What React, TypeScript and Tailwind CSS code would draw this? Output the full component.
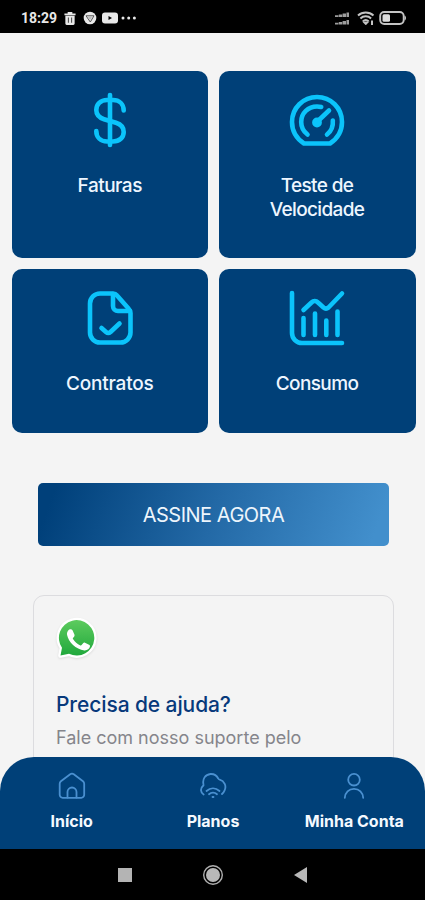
import type { ReactNode } from 'react';

const tiles = [
  { label: 'Faturas', icon: <DollarIcon />, tracking: 'tracking-[-0.5px]' },
  { label: 'Teste de Velocidade', icon: <GaugeIcon />, tracking: 'tracking-[-0.65px]' },
  { label: 'Contratos', icon: <ContractIcon />, tracking: 'tracking-[-0.2px]' },
  { label: 'Consumo', icon: <UsageIcon />, tracking: 'tracking-[-0.6px]' },
];

const navItems = [
  { label: 'Início', icon: <HomeIcon /> },
  { label: 'Planos', icon: <CloudWifiIcon /> },
  { label: 'Minha Conta', icon: <UserIcon /> },
];

function TileIcon({ children }: { children: ReactNode }) {
  return (
    <svg
      viewBox="0 0 60 60"
      className="h-[60px] w-[60px]"
      fill="none"
      stroke="#0bc4fb"
      strokeWidth="4.6"
      strokeLinecap="round"
      strokeLinejoin="round"
    >
      {children}
    </svg>
  );
}

function DollarIcon() {
  return (
    <TileIcon>
      <path d="M30 5v50" />
      <path d="M43.700 20.500c0-6.500-4.500-10.500-10.700-10.500h-6c-6.500 0-10.700 4.500-10.700 10 0 4.500 3 7.700 7.700 9.200l12 3.600c4.700 1.500 7.700 4.700 7.700 9.200 0 5.500-4.200 9.500-10.700 9.500h-6c-6.200 0-10.700-4-10.700-10.500" />
    </TileIcon>
  );
}

function GaugeIcon() {
  return (
    <TileIcon>
      <path d="M17 53.500C9.500 48.500 5 40.500 5 32 5 18 16.200 7 30 7s25 11 25 25c0 8.500-4.500 16.500-12 21.500H17z" />
      <path d="M20.500 44.500C16.500 41.500 14.200 37 14.200 32c0-8.800 7-15.500 15.800-15.500 1.500 0 3 .2 4.200.500" />
      <path d="M45.800 30.500c.5 5.500-1.300 10.500-5.800 14" />
      <path d="M31 31l11-10.500" />
      <circle cx="30" cy="32.500" r="2.600" fill="#0bc4fb" />
    </TileIcon>
  );
}

function ContractIcon() {
  return (
    <TileIcon>
      <path d="M33 5.500H20a10 10 0 0 0-10 10v29a10 10 0 0 0 10 10h20.500a10 10 0 0 0 10-10V25c0-1.800-.6-3-1.800-4.200L37 7.500C36 6.200 34.800 5.500 33 5.500z" />
      <path d="M33 6v12a5 5 0 0 0 5 5h12" />
      <path d="M21.500 40l4.500 4c1.500 1.300 3 1.300 4.500 0l9-8.500" />
    </TileIcon>
  );
}

function UsageIcon() {
  return (
    <TileIcon>
      <path d="M5 5v40a10 10 0 0 0 10 10h40" />
      <path d="M16.500 47V30M28 47V25.500M39.300 47V32.500M50.500 47V23.500" />
      <path d="M16.500 22l8-7.500c2-2 4.500-2 6.500 0l5.500 5c1.500 1.300 3.500 1.300 5 0L55 5.500" />
    </TileIcon>
  );
}

function NavIcon({ children }: { children: ReactNode }) {
  return (
    <svg
      viewBox="0 0 28 28"
      className="h-7 w-7"
      fill="none"
      stroke="#4a90d0"
      strokeWidth="1.8"
      strokeLinecap="round"
      strokeLinejoin="round"
    >
      {children}
    </svg>
  );
}

function HomeIcon() {
  return (
    <NavIcon>
      <path d="M1.700 11.800c0-1 .4-1.800 1.200-2.500l9.300-7c1.100-.8 2.500-.8 3.600 0l9.200 7c.8.700 1.200 1.500 1.200 2.500v11a3 3 0 0 1-3 3H4.700a3 3 0 0 1-3-3z" />
      <path d="M9.500 25.500V20a4.500 4.500 0 0 1 9 0v5.500" />
    </NavIcon>
  );
}

function CloudWifiIcon() {
  return (
    <NavIcon>
      <path d="M4.600 22.500a5.200 5.200 0 0 1-.7-8.500c.5-.4.800-.8.600-1.500C3.200 7 6.200 2.500 11.500 2c3.500-.2 6.200 1.500 7.700 4.500.3.700.7 1 1.500 1.200 4.700 1.300 7 6.300 4.900 10.600-.6 1.500-1.500 2.600-2.600 3.700" />
      <path d="M7.500 19c3.900-3.400 9.100-3.400 13 0M10 22.200c2.300-2 5.700-2 8 0" />
      <path d="M13.500 25h1" />
    </NavIcon>
  );
}

function UserIcon() {
  return (
    <NavIcon>
      <circle cx="14" cy="7.700" r="5.800" />
      <path d="M4.800 25.800c.3-5.400 4-9 9.200-9s8.900 3.600 9.200 9" />
    </NavIcon>
  );
}

function WhatsAppIcon() {
  return (
    <svg viewBox="0 0 44 44" className="h-11 w-11 drop-shadow-[0_1px_1px_rgba(0,0,0,0.1)]">
      <defs>
        <linearGradient id="wa" x1="0" y1="0" x2="0" y2="1">
          <stop offset="0" stopColor="#5dcb5e" />
          <stop offset="1" stopColor="#20a83c" />
        </linearGradient>
      </defs>
      <path
        d="M4.500 38.500L6 30.800A17.700 17.700 0 1 1 13 36.800z"
        fill="url(#wa)"
        stroke="#fff"
        strokeWidth="4.500"
        strokeLinejoin="round"
        paintOrder="stroke"
      />
      <path
        d="M12.200 13.600c1-1.700 3.500-2 4.300-.4l1.900 4.200c.5 1.200-.1 2-1.400 3.500-.3.400-.3.800 0 1.200 1.800 3 4.200 5 7.400 6.300.5.200.9.100 1.200-.3l1.700-2.100c.5-.6 1-.7 1.700-.3l4 2c.8.400 1.100.8 1 1.600-.3 2.700-3 4.300-5.600 4.100-8.500-.6-16-8.500-17.300-15.300-.3-1.700.2-3.200 1.100-4.500z"
        fill="#fff"
      />
    </svg>
  );
}

function StatusBar() {
  return (
    <header className="flex h-[33px] shrink-0 items-center justify-between bg-black pt-[3px] pl-[21px] pr-[18px] text-[#e8e8e8]">
      <div className="flex items-center">
        <span className="w-[43px] whitespace-nowrap font-[Roboto] text-[14px] font-bold">18:29</span>
        <svg viewBox="0 0 12 14" className="h-[13px] w-3" fill="currentColor">
          <path d="M3.500 0h5v1.500H12v2H0v-2h3.500zM1 4h10v8.500c0 .8-.6 1.500-1.400 1.500H2.400C1.600 14 1 13.300 1 12.500z" />
          <path d="M4.300 6v5.500M7.700 6v5.500" stroke="#555" strokeWidth="1.200" />
        </svg>
        <svg viewBox="0 0 14 14" className="ml-[7px] h-3.5 w-3.5">
          <circle cx="7" cy="7" r="6.300" fill="currentColor" />
          <path d="M3 4.800h8L7.300 11z" fill="none" stroke="#555" strokeWidth="1" />
          <circle cx="7" cy="6.800" r="1.800" fill="#bbb" />
        </svg>
        <svg viewBox="0 0 16 12" className="ml-[5px] h-3 w-4">
          <rect y=".5" width="16" height="11" rx="3" fill="currentColor" />
          <path d="M6.500 4v4l3.500-2z" fill="#000" />
        </svg>
        <svg viewBox="0 0 16 4" className="ml-[3px] h-1 w-4" fill="currentColor">
          <circle cx="2" cy="2" r="1.500" />
          <circle cx="7.700" cy="2" r="1.500" />
          <circle cx="13.400" cy="2" r="1.500" />
        </svg>
      </div>
      <div className="flex items-center text-[#c4c4c4]">
        <svg viewBox="0 0 16 13" className="h-[13px] w-4" fill="currentColor">
          <path d="M0 3.200h3.400V5H0zM3.800 2.500h3.400V5H3.800zM7.600 1.500H11V5H7.600zM11.500.5H14V5h-2.500zM0 10.700h3.400v1.800H0zM3.800 10h3.400v2.500H3.800zM7.600 9H11v3.500H7.600zM11.500 8H14v4.500h-2.500z" opacity=".8" />
        </svg>
        <svg viewBox="0 0 18 14" className="ml-[6px] h-3.5 w-[18px]" fill="none" stroke="currentColor" strokeWidth="2">
          <path d="M1 4.600c4.500-4 11-4 15.500 0M3.400 7.500c3-2.900 7.700-2.900 10.700 0M5.900 10.200c1.700-1.500 4-1.500 5.700 0" />
          <path d="M7.500 11.500l1.300 1.300 1.300-1.300zM15 9.500V14" />
        </svg>
        <svg viewBox="0 0 28 14" className="ml-1 h-3.5 w-7">
          <rect x="1.200" y="1" width="23.500" height="12" rx="4" fill="none" stroke="currentColor" strokeWidth="1.900" />
          <rect x="3.500" y="3.200" width="7.500" height="7.600" rx="1.500" fill="#ddd" />
          <path d="M25.500 4.500c2 .5 2 4.500 0 5z" fill="currentColor" />
        </svg>
      </div>
    </header>
  );
}

export default function App() {
  return (
    <div className="flex h-[900px] w-[425px] flex-col overflow-hidden bg-[#f4f4f4] font-[Inter,sans-serif]">
      <StatusBar />

      <div className="relative h-[816px] shrink-0">
        <main className="h-full overflow-hidden pt-[38px]">
          <div className="ml-[11.5px] grid w-[404px] grid-cols-[196.500px_197px] grid-rows-[187.400px_164px] gap-x-[10.500px] gap-y-[11px]">
            {tiles.map((tile) => (
              <button
                key={tile.label}
                className="flex flex-col items-center rounded-[10px] bg-[#004078] pt-[19px]"
              >
                {tile.icon}
                <span
                  className={`mt-[23.500px] w-[130px] text-center text-[19px] leading-6 font-medium text-[#eef6ff] ${tile.tracking}`}
                >
                  {tile.label}
                </span>
              </button>
            ))}
          </div>

          {/* Subscribe button */}
          <button className="mt-[49.600px] ml-[38px] flex h-[63.500px] w-[351px] items-center justify-center rounded-[5px] bg-linear-[110deg,#00407a_5%,#2369a6_50%,#428fcc_95%] text-[20px] tracking-[-0.5px] text-[#edf5fc]">
            <span className="whitespace-nowrap">ASSINE AGORA</span>
          </button>

          {/* Support card */}
          <section className="mt-[48.500px] ml-[33px] h-[260px] w-[361px] rounded-[11px] border border-[#dcdcdf] pt-[21px] pl-[22px]">
            <WhatsAppIcon />
            <h2 className="mt-[30px] whitespace-nowrap text-[21px] leading-7 font-medium tracking-[-0.1px] text-[#07397b]">
              Precisa de ajuda?
            </h2>
            <p className="mt-[7px] whitespace-nowrap text-[18px] leading-6 text-[#85858b]">
              Fale com nosso suporte pelo
            </p>
          </section>
        </main>

        <nav className="absolute inset-x-0 bottom-0 grid h-[92px] grid-cols-3 rounded-t-[34px] bg-[#004078] pl-px">
          {navItems.map((item) => (
            <button key={item.label} className="flex flex-col items-center pt-[15px]">
              {item.icon}
              <span className="mt-[10.500px] whitespace-nowrap text-[16px] leading-5 font-bold text-[#f4f9ff]">
                {item.label}
              </span>
            </button>
          ))}
        </nav>
      </div>

      {/* Android buttons */}
      <footer className="flex flex-1 items-center justify-center gap-[70px] bg-black">
        <div className="h-[14px] w-[14px] bg-[#b4b4b4]" />
        <svg viewBox="0 0 22 22" className="h-[22px] w-[22px]">
          <circle cx="11" cy="11" r="9.300" fill="none" stroke="#b0b0b0" strokeWidth="1.400" />
          <circle cx="11" cy="11" r="7" fill="#b8b8b8" />
        </svg>
        <svg viewBox="0 0 13 16" className="h-4 w-[13px]" fill="#b8b8b8">
          <path d="M13 0v16L0 8z" />
        </svg>
      </footer>
    </div>
  );
}
